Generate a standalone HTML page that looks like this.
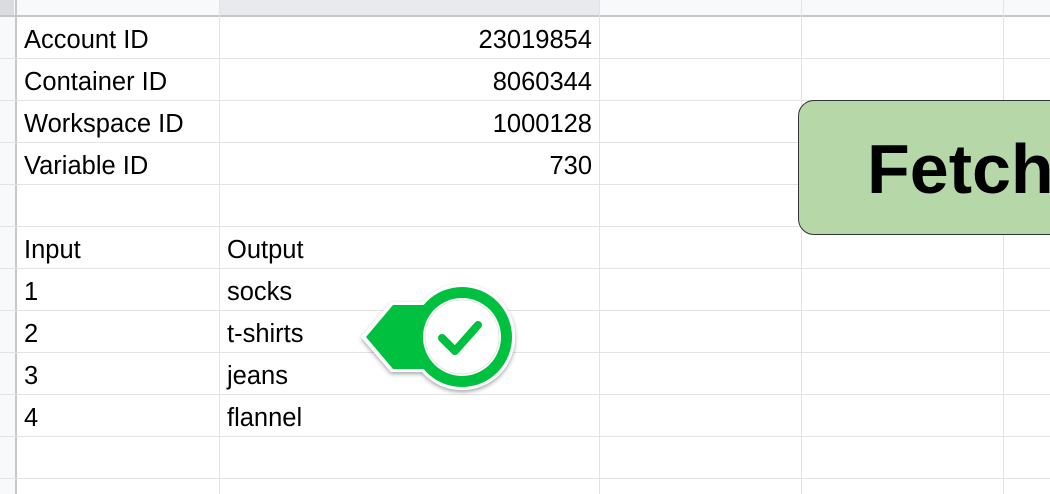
<!DOCTYPE html>
<html><head><style>
html,body{margin:0;padding:0;width:1050px;height:494px;overflow:hidden;background:#fff;font-family:"Liberation Sans",Arial,sans-serif;}
.h{position:absolute;left:0;width:1050px;height:1px;background:#e2e3e3;}
.v{position:absolute;top:0;width:1px;height:494px;background:#e2e3e3;}
.t{position:absolute;font-size:25.5px;color:#000;line-height:42px;margin-top:1px;}
.r{text-align:right;}
</style></head><body>
<div style="position:absolute;left:0;top:0;width:1050px;height:16px;background:#f8f9fa"></div>
<div style="position:absolute;left:220px;top:0;width:379px;height:16px;background:#e8eaed"></div>
<div style="position:absolute;left:0;top:0;width:15px;height:494px;background:#f8f9fa"></div>
<div style="position:absolute;left:0;top:0;width:14px;height:15px;background:#dadce0"></div>
<div style="position:absolute;left:0;top:15px;width:1050px;height:2px;background:#c7c7c7"></div>
<div style="position:absolute;left:15px;top:0;width:2px;height:494px;background:#c7c7c7"></div>
<div class="h" style="top:58px"></div><div class="h" style="top:100px"></div><div class="h" style="top:142px"></div>
<div class="h" style="top:184px"></div><div class="h" style="top:226px"></div><div class="h" style="top:268px"></div>
<div class="h" style="top:310px"></div><div class="h" style="top:352px"></div><div class="h" style="top:394px"></div>
<div class="h" style="top:436px"></div><div class="h" style="top:478px"></div>
<div class="v" style="left:219px"></div><div class="v" style="left:599px"></div><div class="v" style="left:801px"></div><div class="v" style="left:1003px"></div>

<div class="t" style="left:24px;top:18px">Account ID</div>
<div class="t" style="left:24px;top:60px">Container ID</div>
<div class="t" style="left:24px;top:102px">Workspace ID</div>
<div class="t" style="left:24px;top:144px">Variable ID</div>
<div class="t r" style="left:300px;width:292px;top:18px">23019854</div>
<div class="t r" style="left:300px;width:292px;top:60px">8060344</div>
<div class="t r" style="left:300px;width:292px;top:102px">1000128</div>
<div class="t r" style="left:300px;width:292px;top:144px">730</div>
<div class="t" style="left:24px;top:228px">Input</div>
<div class="t" style="left:227px;top:228px">Output</div>
<div class="t" style="left:24px;top:270px">1</div><div class="t" style="left:227px;top:270px">socks</div>
<div class="t" style="left:24px;top:312px">2</div><div class="t" style="left:227px;top:312px">t-shirts</div>
<div class="t" style="left:24px;top:354px">3</div><div class="t" style="left:227px;top:354px">jeans</div>
<div class="t" style="left:24px;top:396px">4</div><div class="t" style="left:227px;top:396px">flannel</div>

<div style="position:absolute;left:798px;top:100px;width:280px;height:135px;background:#b6d7a8;border:1px solid #333;border-radius:16px;box-sizing:border-box"></div>
<div style="position:absolute;left:867px;top:134px;font-size:70px;font-weight:bold;line-height:70px;color:#000;white-space:nowrap">Fetch</div>

<svg style="position:absolute;left:355px;top:278px" width="170" height="120" viewBox="355 278 170 120">
<defs><filter id="s" x="-20%" y="-20%" width="140%" height="140%"><feDropShadow dx="0" dy="2" stdDeviation="2" flood-color="#000" flood-opacity="0.35"/></filter></defs>
<g filter="url(#s)" fill="#fff">
<circle cx="462" cy="337" r="53"/>
<polygon points="361,337 391,302 440,302 440,372 391,372"/>
</g>
<g fill="#00c13f">
<circle cx="462" cy="337" r="50"/>
<polygon points="366,337 393,305 440,305 440,369 393,369"/>
</g>
<circle cx="462" cy="337" r="39" fill="#fff"/>
<circle cx="462" cy="337" r="37" fill="none" stroke="#e6e6e6" stroke-width="1"/>
<path d="M442 338 L455 351 L478 325" fill="none" stroke="#00c13f" stroke-width="8" stroke-linecap="round" stroke-linejoin="round"/>
</svg>
</body></html>
